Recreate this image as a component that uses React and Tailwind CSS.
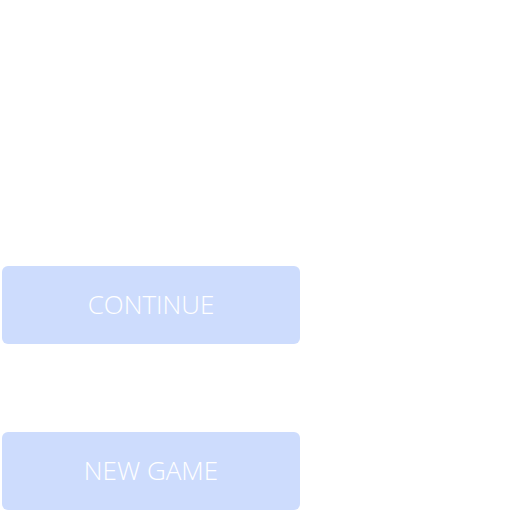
import React from 'react';

const MenuButton = ({ label }) => (
  <button
    type="button"
    className="w-[298px] h-[78px] rounded-[6px] bg-[#cddcfd] text-white text-[26px] font-[350] flex items-center justify-center pb-[2px]"
  >
    {label}
  </button>
);

const App = () => {
  return (
    <div
      className="w-[512px] h-[512px] bg-white flex flex-col gap-[88px] pt-[266px] pl-[2px]"
      style={{ fontFamily: '"Open Sans", "Noto Sans", sans-serif' }}
    >
      <MenuButton label="CONTINUE" />
      <MenuButton label="NEW GAME" />
    </div>
  );
};

export default App;
